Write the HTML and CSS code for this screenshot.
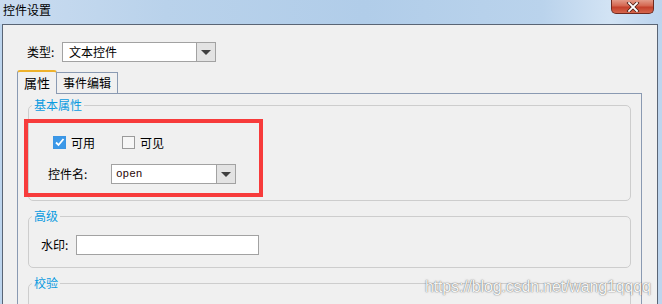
FILE: index.html
```html
<!DOCTYPE html>
<html lang="zh-CN">
<head>
  <meta charset="UTF-8">
  <title>控件设置</title>
  <link rel="stylesheet" href="styles.css">
</head>
<body>
  <div class="titlebar">
    <span class="title">控件设置</span>
    <span class="close">
      <svg width="14" height="10" viewBox="0 0 14 10"><path d="M3 1 L11 9 M11 1 L3 9" stroke="#4a2018" stroke-width="3.4" stroke-linecap="square"/><path d="M3 1 L11 9 M11 1 L3 9" stroke="#fff" stroke-width="1.8" stroke-linecap="square"/></svg>
    </span>
  </div>

  <div class="client">
    <div class="type-row">
      <span class="label type-label">类型:</span>
      <div class="combo type-combo">
        <span class="combo-text">文本控件</span>
        <span class="combo-btn"><i class="arrow"></i></span>
      </div>
    </div>

    <div class="tabs">
      <span class="tab active">属性</span>
      <span class="tab">事件编辑</span>
    </div>

    <div class="tab-panel">
      <fieldset class="group group-basic">
        <legend>基本属性</legend>
        <div class="check-row">
          <label class="check"><span class="box checked"><svg width="11" height="11" viewBox="0 0 11 11"><path d="M2 5.5 L4.5 8 L9.5 2" fill="none" stroke="#fff" stroke-width="1.8"/></svg></span>可用</label>
          <label class="check"><span class="box"></span>可见</label>
        </div>
        <div class="field-row">
          <span class="label name-label">控件名:</span>
          <div class="combo name-combo">
            <span class="combo-text mono">open</span>
            <span class="combo-btn"><i class="arrow"></i></span>
          </div>
        </div>
      </fieldset>

      <fieldset class="group group-adv">
        <legend>高级</legend>
        <div class="field-row">
          <span class="label mark-label">水印:</span>
          <span class="textbox"></span>
        </div>
      </fieldset>

      <fieldset class="group group-check">
        <legend>校验</legend>
      </fieldset>
    </div>
  </div>

  <!-- annotation drawn over the dialog -->
  <div class="highlight"></div>
  <div class="watermark">https://blog.csdn.net/wang1qqqq</div>
</body>
</html>
```

FILE: styles.css
```css
body {
  margin: 0;
  width: 662px;
  height: 304px;
  overflow: hidden;
  position: relative;
  background: #bdd5ee;
  font-family: "Noto Sans CJK SC", "Liberation Sans", sans-serif;
  font-size: 12px;
  color: #000;
}
.titlebar {
  height: 24px;
  display: flex;
  justify-content: space-between;
  align-items: flex-start;
  background: linear-gradient(90deg, #cadcf0 0%, #b9d2eb 25%, #b1cde9 55%, #bad3ec 82%, #d2e3f4 92%, #bcd4ee 100%);
}
.title {
  padding: 2px 0 0 3px;
  line-height: 16px;
  font-size: 12px;
}
.close {
  width: 43px;
  height: 14px;
  margin-right: 8px;
  box-sizing: border-box;
  border: 1px solid #6e2a20;
  border-top: none;
  border-radius: 0 0 5px 5px;
  background: linear-gradient(#e39a88, #d46650 45%, #c4402b 55%, #d5664c);
  display: flex;
  align-items: center;
  justify-content: center;
}
.client {
  margin: 0 4px 0 2px;
  height: 280px;
  box-sizing: border-box;
  border: 1px solid #5a6575;
  border-bottom: none;
  background: #f0f0f0;
  overflow: hidden;
}
.type-row {
  display: flex;
  align-items: center;
  margin-top: 17px;
  padding-left: 24px;
}
.label {
  line-height: 14px;
}
.type-label { width: 35px; }
.combo {
  display: flex;
  height: 20px;
  box-sizing: border-box;
  border: 1px solid #a2a2a2;
  background: #fff;
}
.type-combo { width: 154px; }
.name-combo { width: 125px; }
.combo-text {
  flex: 1;
  padding-left: 6px;
  line-height: 18px;
}
.mono {
  font-family: "Liberation Mono", monospace;
  font-size: 11px;
  color: #2a0606;
  padding-left: 4px;
}
.combo-btn {
  width: 18px;
  border-left: 1px solid #a2a2a2;
  background: #e3e3e3;
  display: flex;
  align-items: center;
  justify-content: center;
}
.arrow {
  width: 0;
  height: 0;
  border-left: 5px solid transparent;
  border-right: 5px solid transparent;
  border-top: 5px solid #3f3f3f;
}
.tabs {
  display: flex;
  align-items: flex-end;
  margin: 8px 0 0 14px;
}
.tab {
  height: 20px;
  line-height: 20px;
  padding: 0 6px;
  border: 1px solid #8a9ab2;
  border-left: none;
  border-bottom: none;
  background: #f0f0f0;
}
.tab.active {
  width: 40px;
  padding: 0;
  box-sizing: border-box;
  height: 24px;
  line-height: 22px;
  text-align: center;
  border-left: 1px solid #8a9ab2;
  border-top: 2px solid #eeb22c;
  border-radius: 3px 3px 0 0;
  margin-bottom: -1px;
  position: relative;
  z-index: 1;
  font-size: 13px;
}
.tab-panel {
  margin: 0 15px 0 14px;
  height: 220px;
  border: 1px solid #8a9ab2;
  border-bottom: none;
  padding: 4px 10px 0;
}
.group {
  margin: 0;
  padding: 0;
  min-inline-size: 0;
  border: 1px solid #cdcdcd;
  border-radius: 5px;
}
.group legend {
  margin-left: 3px;
  padding: 0 2px;
  line-height: 14px;
  font-size: 12px;
  color: #0a9be0;
}
.group-basic { padding-bottom: 16px; }
.group-adv { margin-top: 8px; padding-bottom: 12px; }
.group-check { margin-top: 8px; height: 60px; }
.check-row {
  display: flex;
  margin-top: 24px;
  padding-left: 24px;
  height: 13px;
}
.check {
  display: flex;
  align-items: center;
  gap: 5px;
  line-height: 13px;
  margin-right: 27px;
}
.box {
  width: 13px;
  height: 13px;
  box-sizing: border-box;
  border: 1px solid #9a9a9a;
  background: #f6f6f6;
  display: flex;
  align-items: center;
  justify-content: center;
}
.box.checked {
  border-color: #3b95e4;
  background: #3b98e8;
}
.field-row {
  display: flex;
  align-items: center;
  margin-top: 15px;
  padding-left: 19px;
}
.name-label { width: 63px; }
.group-adv .field-row {
  margin-top: 12px;
  padding-left: 12px;
}
.mark-label { width: 35px; }
.textbox {
  width: 183px;
  height: 20px;
  box-sizing: border-box;
  border: 1px solid #a2a2a2;
  background: #fff;
}
.highlight {
  position: absolute;
  left: 24px;
  top: 119px;
  width: 239px;
  height: 78px;
  box-sizing: border-box;
  border: 4px solid #f73b3b;
}
.watermark {
  position: absolute;
  left: 425px;
  top: 278px;
  font-family: "Liberation Sans", Arial, sans-serif;
  font-size: 16px;
  letter-spacing: -0.15px;
  color: rgba(255, 255, 255, 0.95);
  text-shadow: 0 0 1px rgba(60, 60, 60, 0.8), 0 0 2px rgba(120, 120, 120, 0.5);
}
```
